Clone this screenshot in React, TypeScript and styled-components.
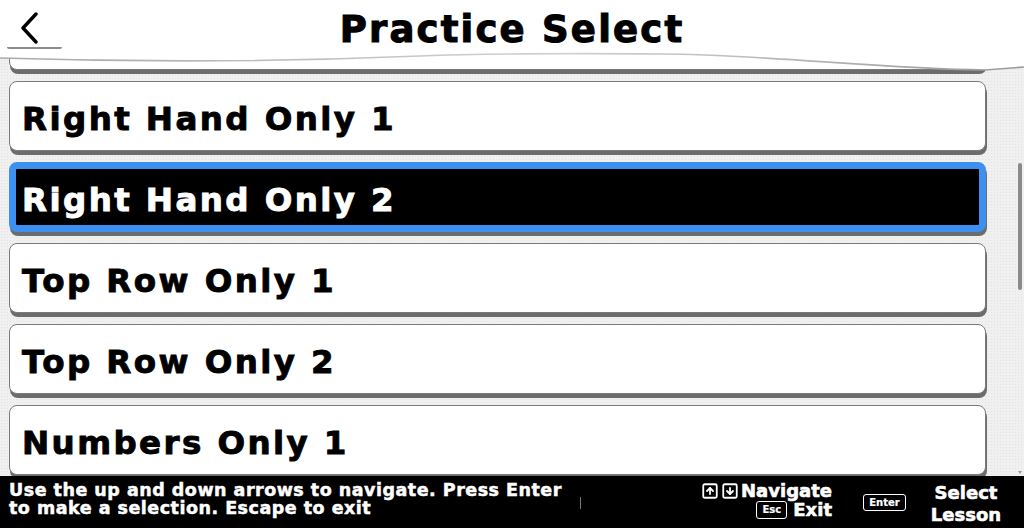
import React, { useLayoutEffect, useRef } from "react";
import styled, { createGlobalStyle } from "styled-components";
import { SquareArrowUp, SquareArrowDown } from "lucide-react";

const lessons = [
  "Home Row Only 1",
  "Home Row Only 2",
  "Home Row Only 3",
  "Left Hand Only 1",
  "Left Hand Only 2",
  "Right Hand Only 1",
  "Right Hand Only 2",
  "Top Row Only 1",
  "Top Row Only 2",
  "Numbers Only 1",
  "Numbers Only 2",
  "Bottom Row Only 1",
  "Bottom Row Only 2",
  "Symbols Only 1",
  "Symbols Only 2",
  "Full Keyboard 1",
  "Full Keyboard 2"
];

const selectedIndex = 6;

const GlobalStyle = createGlobalStyle`
  html, body {
    margin: 0;
    padding: 0;
    height: 100%;
    overflow: hidden;
  }
  body {
    font-family: "DejaVu Sans", Inter, sans-serif;
    font-weight: 700;
    background: #fff;
  }
`;

const Page = styled.div`
  display: flex;
  flex-direction: column;
  width: 1024px;
  height: 528px;
`;

const Header = styled.header`
  position: relative;
  z-index: 2;
  display: grid;
  grid-template-columns: 1fr auto 1fr;
  align-items: start;
  height: 50px;
  background: #fff;
`;

const BackButton = styled.button`
  justify-self: start;
  width: 55px;
  height: 49px;
  margin-left: 7px;
  padding: 12px 0 0 12px;
  border: none;
  border-bottom: 2px solid #8c8c8c;
  border-radius: 0 0 2px 2px;
  background: transparent;
  text-align: left;
  cursor: pointer;
`;

const Title = styled.h1`
  margin: 0;
  padding-top: 10px;
  font-size: 37px;
  line-height: 40px;
  font-weight: 700;
  letter-spacing: 2.2px;
  -webkit-text-stroke: 1.1px #000;
  color: #000;
`;

const Wave = styled.svg`
  position: absolute;
  left: 0;
  top: 50px;
  width: 1024px;
  height: 26px;
  pointer-events: none;
`;

const ListFrame = styled.div`
  position: relative;
  flex: 1;
  min-height: 0;
  background-color: #f0f0f0;
  background-image: radial-gradient(#e2e2e2 0.6px, transparent 0.7px);
  background-size: 3px 3px;
`;

const List = styled.div`
  height: 100%;
  box-sizing: border-box;
  overflow-y: scroll;
  scrollbar-width: none;
  padding: 5px 38px 10px 9px;
  display: flex;
  flex-direction: column;
  gap: 11px;

  &::-webkit-scrollbar {
    display: none;
  }
`;

const Thumb = styled.div`
  position: absolute;
  top: 113px;
  right: 2px;
  width: 4px;
  height: 127px;
  border-radius: 3px;
  background: #8a8a8a;
`;

const DownArrow = styled.div`
  position: absolute;
  right: 2px;
  bottom: 2px;
  border-left: 2.5px solid transparent;
  border-right: 2.5px solid transparent;
  border-top: 3px solid #9a9a9a;
`;

const Item = styled.div<{ $active?: boolean }>`
  flex: none;
  box-sizing: border-box;
  display: flex;
  align-items: center;
  height: 70px;
  padding-left: ${p => (p.$active ? "6px" : "12px")};
  padding-top: 6px;
  border: ${p => (p.$active ? "7px solid #3d8ff0" : "1px solid #7a7a7a")};
  border-radius: 8px;
  background: ${p => (p.$active ? "#000" : "#fff")};
  color: ${p => (p.$active ? "#fff" : "#000")};
  box-shadow: 1px 4px 0 #6c6c6c;
  font-size: 32.5px;
  font-weight: 700;
  letter-spacing: 2.4px;
  -webkit-text-stroke: 0.9px currentColor;
  white-space: nowrap;
`;

const Footer = styled.footer`
  flex: none;
  display: flex;
  align-items: flex-start;
  height: 52px;
  padding: 0 22px 0 9px;
  background: #000;
  color: #fff;
`;

const Help = styled.p`
  margin: 5px 0 0;
  width: 560px;
  font-size: 17.5px;
  line-height: 18px;
  font-weight: 700;
  letter-spacing: 0.5px;
  -webkit-text-stroke: 0.5px #fff;
  white-space: nowrap;
`;

const Divider = styled.span`
  width: 1px;
  height: 12px;
  margin: 21px 0 0 11px;
  background: #777;
`;

const Shortcuts = styled.div`
  display: flex;
  flex-direction: column;
  align-items: flex-end;
  margin-left: auto;
  margin-top: 6px;
  font-size: 18px;
  line-height: 18px;
  font-weight: 700;
  -webkit-text-stroke: 0.6px #fff;
`;

const ShortcutRow = styled.div`
  display: flex;
  align-items: center;
  gap: 2px;
  height: 18px;

  & + & {
    margin-top: 1px;
  }
`;

const Key = styled.span<{ $width: number }>`
  display: inline-flex;
  align-items: center;
  justify-content: center;
  box-sizing: border-box;
  width: ${p => p.$width}px;
  height: 18px;
  border: 1.5px solid #fff;
  border-radius: 3px;
  font-size: 10px;
  line-height: 10px;
  font-weight: 700;
  -webkit-text-stroke: 0.2px #fff;
`;

const KeyLabel = styled.span`
  margin-left: 4px;
`;

const EnterKey = styled(Key)`
  margin: 18px 0 0 31px;
  height: 17px;
`;

const Action = styled.div`
  margin: 6px 0 0 24px;
  width: 72px;
  text-align: center;
  font-size: 18px;
  line-height: 22px;
  font-weight: 700;
  -webkit-text-stroke: 0.6px #fff;
`;

export default function App() {
  const listRef = useRef<HTMLDivElement>(null);
  const firstRef = useRef<HTMLDivElement>(null);

  // scroll so the list sits where the reference view has it
  useLayoutEffect(() => {
    const list = listRef.current!;
    const target = firstRef.current!;
    list.scrollTop = target.getBoundingClientRect().top - 81 + list.scrollTop;
  }, []);

  return (
    <>
      <GlobalStyle />
      <Page>
        <Header>
          <BackButton aria-label="Back">
            <svg width="20" height="32" viewBox="0 0 20 32">
              <path
                d="M17 2 L4 16 L17 30"
                fill="none"
                stroke="#000"
                strokeWidth="3.4"
                strokeLinecap="round"
                strokeLinejoin="round"
              />
            </svg>
          </BackButton>
          <Title>Practice Select</Title>
          <span />
          <Wave viewBox="0 0 1024 26">
            <defs>
              <linearGradient id="edge" x1="0" x2="1" y1="0" y2="0">
                <stop offset="0" stopColor="#a9a9a9" />
                <stop offset="0.55" stopColor="#d2d2d2" />
                <stop offset="1" stopColor="#9a9a9a" />
              </linearGradient>
            </defs>
            <path
              d="M0 0 L1024 0 L1024 17 L985 20 C880 19 760 4 660 4 C540 3 470 4 420 6 C300 11 160 13 0 8 Z"
              fill="#fff"
            />
            <path
              d="M0 8 C160 13 300 11 420 6 C470 4 540 3 660 4 C760 4 880 19 985 20 L1024 17"
              fill="none"
              stroke="url(#edge)"
              strokeWidth="1.6"
            />
          </Wave>
        </Header>
        <ListFrame>
          <List ref={listRef}>
            {lessons.map((name, i) => (
              <Item
                key={name}
                ref={i === 5 ? firstRef : undefined}
                $active={i === selectedIndex}
              >
                {name}
              </Item>
            ))}
          </List>
          <Thumb />
          <DownArrow />
        </ListFrame>
        <Footer>
          <Help>
            Use the up and down arrows to navigate. Press Enter
            <br />
            to make a selection. Escape to exit
          </Help>
          <Divider />
          <Shortcuts>
            <ShortcutRow>
              <SquareArrowUp size={18} strokeWidth={2.4} />
              <SquareArrowDown size={18} strokeWidth={2.4} />
              <span>Navigate</span>
            </ShortcutRow>
            <ShortcutRow>
              <Key $width={31}>Esc</Key>
              <KeyLabel>Exit</KeyLabel>
            </ShortcutRow>
          </Shortcuts>
          <EnterKey $width={43}>Enter</EnterKey>
          <Action>
            Select
            <br />
            Lesson
          </Action>
        </Footer>
      </Page>
    </>
  );
}
